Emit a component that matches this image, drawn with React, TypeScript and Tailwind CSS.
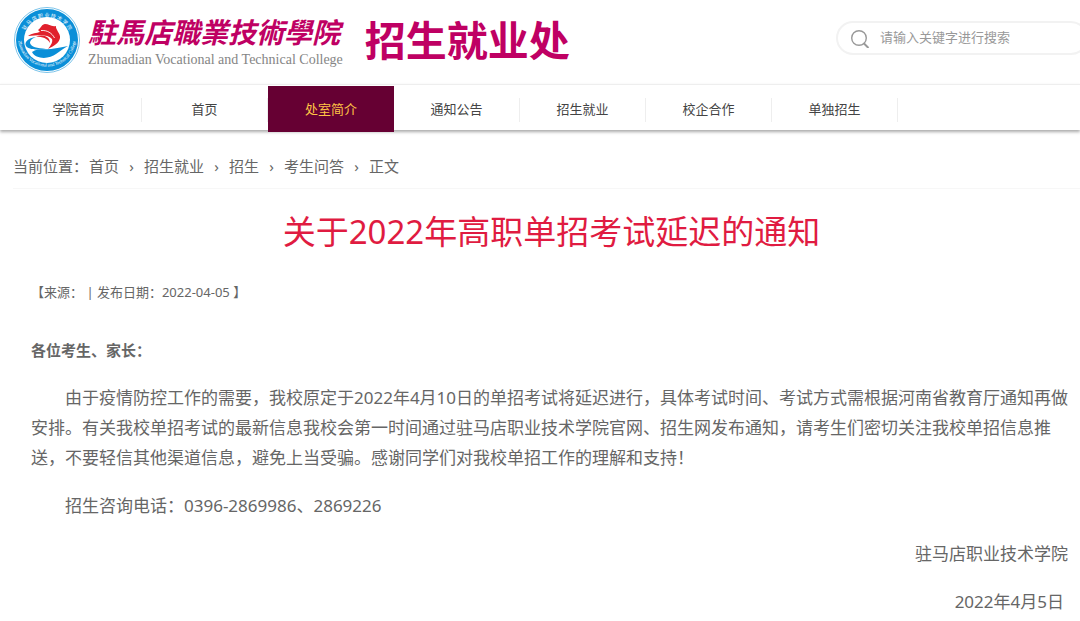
import React from 'react';

const navItems = ['学院首页', '首页', '处室简介', '通知公告', '招生就业', '校企合作', '单独招生'];
const activeItem = '处室简介';

const breadcrumbs = ['首页', '招生就业', '招生', '考生问答', '正文'];

const CollegeEmblem: React.FC = () => (
  <svg viewBox="0 0 68 68" className="size-[68px] shrink-0" role="img" aria-label="校徽">
    <defs>
      <path id="ring-top" d="M 9 36 A 25 25 0 0 1 59 36" />
      <path id="ring-bottom" d="M 5.6 27 A 28.8 28.8 0 1 0 62.4 27" />
    </defs>
    <circle cx="34" cy="34" r="32.5" fill="#fff" stroke="#7cc4ea" strokeWidth="1" />
    <circle cx="34" cy="34" r="31" fill="#0a8fd8" />
    <circle cx="34" cy="34" r="23" fill="#fff" />
    <text fill="#fff" fontSize="5" fontWeight="400" fontFamily="'Noto Sans CJK SC', sans-serif">
      <textPath href="#ring-top" startOffset="50%" textAnchor="middle">
        驻 马 店 职 业 技 术 学 院
      </textPath>
    </text>
    <text fill="#fff" fontSize="4.6" fontFamily="'Liberation Serif', serif">
      <textPath href="#ring-bottom" startOffset="50%" textAnchor="middle">
        Zhumadian Vocational and Technical College
      </textPath>
    </text>
    {/* red bird above, blue wave below */}
    <path
      d="M25 24 C28 22 29 18 32 18 C36 18 38 21 43 20 C42 23 48 28 47 32 C46 37 41 40 35 43 C38 39 40 36 39 33 C35 28 26 29 15 30 C19 27 24 27 27 26 Z"
      fill="#e0202c"
    />
    <path d="M28 24.5 C34 24 39 27 41.5 32" fill="none" stroke="#fff" strokeWidth="0.9" />
    <path d="M23 30.5 C31 28 37 31 37 37 C34 32 30 31 23 30.5 Z" fill="#e0202c" />
    <path
      d="M23 31 C15 32 11 36 13 40 C16 44 25 44 33 43 C24 42 18 41 17 37 C17 34 20 32 23 31 Z"
      fill="#0a8fd8"
    />
    <path
      d="M19 46 C24 42 31 44 38 43 C45 42 50 41 55 40 C50 43 47 45 43 48 C37 53 23 54 19 46 Z"
      fill="#0a8fd8"
    />
  </svg>
);

const SearchIcon: React.FC = () => (
  <svg viewBox="0 0 20 20" className="size-5 shrink-0" fill="none" stroke="#999" aria-hidden="true">
    <circle cx="9" cy="10" r="7.3" strokeWidth="1.4" />
    <path d="M13.5 15 L18.5 20" strokeWidth="2" />
  </svg>
);

const Header: React.FC = () => (
  <header className="flex h-[84px] justify-between">
    <a href="#" className="flex items-start pl-[13px] pt-[6px]">
      <CollegeEmblem />
      <span className="ml-[7px] flex flex-col pt-1 text-[#bf0063]">
        <span className="text-[28px] leading-[42px] font-bold italic font-['Noto_Sans_CJK_TC',sans-serif]">
          駐馬店職業技術學院
        </span>
        <span className="text-[14px] leading-4 text-[#858585] font-['Liberation_Serif',serif]">
          Zhumadian Vocational and Technical College
        </span>
      </span>
      <span className="ml-[22px] pt-1 text-[41px] leading-[60px] font-bold text-[#bf0063]">招生就业处</span>
    </a>
    <form className="-mr-2 mt-[21px] flex h-[34px] w-[252px] items-center gap-[10px] rounded-full border-2 border-[#f2f2f2] pl-3">
      <SearchIcon />
      <input
        type="text"
        aria-label="搜索"
        placeholder="请输入关键字进行搜索"
        className="w-full text-[13px] outline-none placeholder:text-[#999]"
      />
    </form>
  </header>
);

const NavBar: React.FC = () => (
  <nav className="flex h-[46px] border-t border-[#eee] pl-4 pt-px shadow-[0_2px_3px_#aaa]">
    {navItems.map(item => (
      <a
        key={item}
        href="#"
        className={
          item === activeItem
            ? 'flex h-[46px] w-[126px] items-center justify-center bg-[#660033] pt-[2px] text-[13px] text-[#ffc445]'
            : 'mt-3 flex h-6 w-[126px] items-center justify-center border-r border-[#eee] text-[13px] text-[#444]'
        }
      >
        {item}
      </a>
    ))}
  </nav>
);

const Breadcrumb: React.FC = () => (
  <div className="ml-[13px] flex h-[59px] items-center border-b border-[#f7f7f7] pt-[14px] text-[15px] text-[#666]">
    <span className="w-[76px]">当前位置：</span>
    {breadcrumbs.map((crumb, i) => (
      <React.Fragment key={crumb}>
        {i > 0 && <span className="w-[25px] text-center">›</span>}
        <a href="#">{crumb}</a>
      </React.Fragment>
    ))}
  </div>
);

const Article: React.FC = () => (
  <article className="pl-[31px] pr-2 text-[17px] leading-[30px] text-[#666]">
    <h1 className="pt-[19px] text-center text-[33px] leading-[48px] text-[#e01b41]">
      关于2022年高职单招考试延迟的通知
    </h1>
    <p className="pt-[21px] text-[13px]">【来源： | 发布日期：2022-04-05 】</p>
    <div className="flex flex-col gap-[18px] pt-7">
      <p className="text-[15px] leading-[30px] font-bold">各位考生、家长：</p>
      <p className="indent-[34px]">
        由于疫情防控工作的需要，我校原定于2022年4月10日的单招考试将延迟进行，具体考试时间、考试方式需根据河南省教育厅通知再做安排。有关我校单招考试的最新信息我校会第一时间通过驻马店职业技术学院官网、招生网发布通知，请考生们密切关注我校单招信息推送，不要轻信其他渠道信息，避免上当受骗。感谢同学们对我校单招工作的理解和支持！
      </p>
      <p className="indent-[34px]">招生咨询电话：0396-2869986、2869226</p>
      <p className="pr-1 text-right">驻马店职业技术学院</p>
      <p className="pr-2 text-right">2022年4月5日</p>
    </div>
  </article>
);

const App: React.FC = () => (
  <div className="overflow-hidden bg-white font-['Noto_Sans','Noto_Sans_CJK_SC',sans-serif]">
    <Header />
    <NavBar />
    <Breadcrumb />
    <Article />
  </div>
);

export default App;
